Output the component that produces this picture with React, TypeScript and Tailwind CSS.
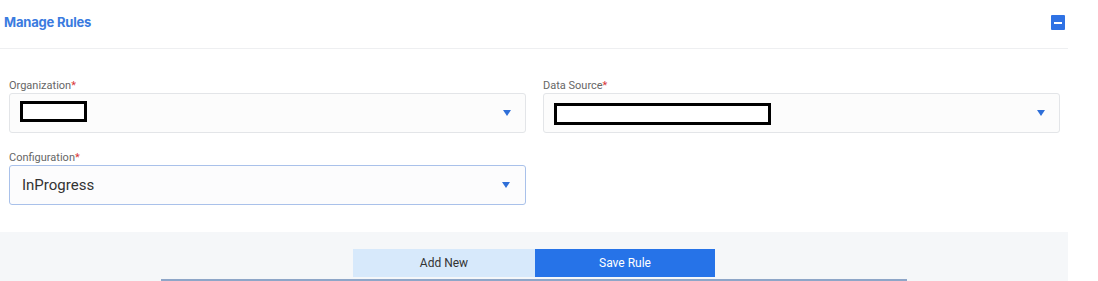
import { ReactNode } from 'react'

const Caret = () => (
  <svg width="8" height="6" viewBox="0 0 8 6" className="shrink-0">
    <path d="M0 0 H8 L4 6 Z" fill="#2f6fd8" />
  </svg>
)

function Field({ label, children, focused }: { label: string; children: ReactNode; focused?: boolean }) {
  return (
    <div>
      <div className="h-[14px] text-[11px] leading-[14px] text-[#666]">
        {label}
        <span className="text-[#d9383a]">*</span>
      </div>
      <div
        className={
          focused
            ? 'flex h-[40px] items-center justify-between rounded-[3px] border border-[#a9c1ea] bg-[#fcfcfd] pl-[12px] pr-[15px]'
            : 'flex h-[40px] items-center justify-between rounded-[3px] border border-[#e3e5e8] bg-[#fcfcfc] pl-[10px] pr-[14px]'
        }
      >
        <div className="flex items-center">{children}</div>
        <Caret />
      </div>
    </div>
  )
}

export default function App() {
  return (
    <div className="h-[281px] w-[1098px] overflow-hidden bg-white" style={{ fontFamily: 'Roboto, "Liberation Sans", sans-serif' }}>
      <div className="w-[1068px] bg-white">
        {/* Header */}
        <div className="flex h-[49px] items-center justify-between border-b border-[#eeeff1] pl-[4px] pr-[3px] pb-[2px]">
          <h2 className="text-[13px] font-bold tracking-[-0.2px] text-[#3a7be0]" style={{ fontFamily: 'Inter, Roboto, sans-serif' }}>
            Manage Rules
          </h2>
          <button className="mt-[-1px] flex h-[15px] w-[14px] items-center justify-center rounded-[1px] bg-[#2f72e4]">
            <span className="h-[2px] w-[8px] bg-white" />
          </button>
        </div>

        {/* Fields */}
        <div className="pt-[30px] pb-[27px] pl-[9px] pr-[8px]">
          <div className="grid grid-cols-2 gap-x-[17px] gap-y-[18px]">
            <Field label="Organization">
              <div className="mt-[-3px] h-[21px] w-[67px] border-[3px] border-black bg-white" />
            </Field>
            <Field label="Data Source">
              <div className="mt-[1px] h-[22px] w-[217px] border-[3px] border-black bg-white" />
            </Field>
            <Field label="Configuration" focused>
              <span className="text-[15px] text-[#333]">InProgress</span>
            </Field>
          </div>
        </div>

        {/* Footer */}
        <div className="flex flex-col items-center bg-[#f5f7f9] pt-[17px]">
          <div className="flex">
            <button className="h-[28px] w-[182px] bg-[#d7e9fb] text-[12px] text-[#333]">Add New</button>
            <button className="h-[28px] w-[180px] bg-[#2673e8] text-[12px] text-white">Save Rule</button>
          </div>
          <div className="mt-[2px] h-[2px] w-[746px] bg-[#8ea6c8]" />
        </div>
      </div>
    </div>
  )
}
